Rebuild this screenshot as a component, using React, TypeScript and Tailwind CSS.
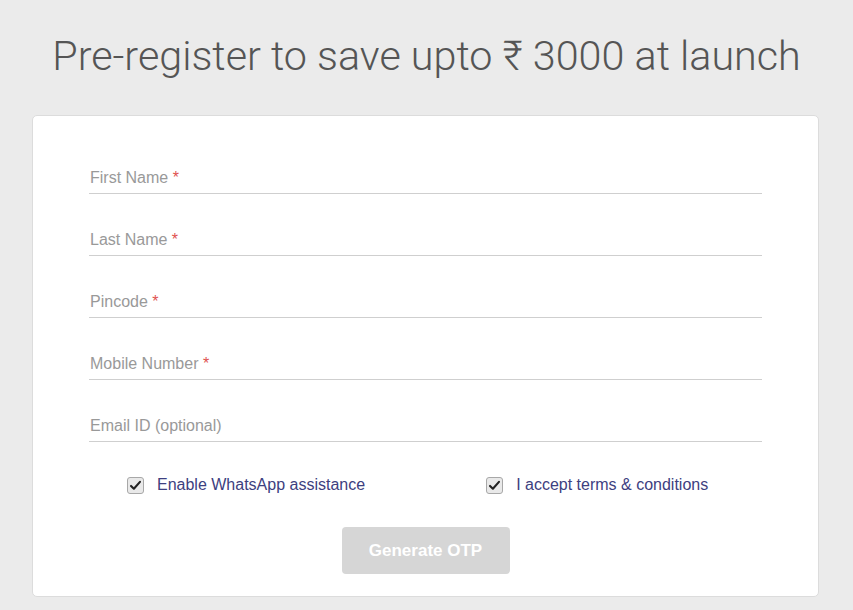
import React from 'react';

const fields = [
  { label: 'First Name', required: true },
  { label: 'Last Name', required: true },
  { label: 'Pincode', required: true },
  { label: 'Mobile Number', required: true },
  { label: 'Email ID (optional)', required: false },
];

function CheckBox() {
  return (
    <span className="flex h-[17px] w-[17px] items-center justify-center rounded-[3px] border border-[#a8a8a8] bg-[#e9e9e9]">
      <svg viewBox="0 0 16 16" className="h-[13px] w-[13px]">
        <path d="M2.5 8.5 L6 12 L13.5 3.5" fill="none" stroke="#222" strokeWidth="2.6" strokeLinecap="round" strokeLinejoin="round" />
      </svg>
    </span>
  );
}

export default function App() {
  return (
    <div className="min-h-[610px] w-full bg-[#ebebeb] font-['Roboto',sans-serif]">
      <h1 className="pt-[29px] text-center text-[41.3px] font-light leading-[54px] text-[#555]">
        Pre-register to save upto ₹ 3000 at launch
      </h1>
      <div className="ml-[32px] mr-[34px] mt-[32px] rounded-[5px] border border-[#dcdcdc] bg-white pb-[22px] pl-[56px] pr-[56px] pt-[16px] font-['Liberation_Sans',sans-serif]">
        {fields.map((f) => (
          <div key={f.label} className="flex h-[62px] items-end border-b border-[#cfcfcf] pb-[5px]">
            <span className="pl-px text-[16px] leading-[20px] text-[#999]">
              {f.label}
              {f.required && <span className="text-[#e0524f]"> *</span>}
            </span>
          </div>
        ))}
        <div className="mt-[33px] flex text-[16px] leading-[20px] text-[#3d4080]">
          <label className="ml-[38px] flex items-center gap-[13px]">
            <CheckBox />
            Enable WhatsApp assistance
          </label>
          <label className="ml-[121px] flex items-center gap-[13px]">
            <CheckBox />
            I accept terms &amp; conditions
          </label>
        </div>
        <div className="mt-[32px] flex justify-center">
          <button className="h-[47px] w-[168px] rounded-[4px] bg-[#d6d6d6] text-[17px] font-bold text-white">
            Generate OTP
          </button>
        </div>
      </div>
    </div>
  );
}
